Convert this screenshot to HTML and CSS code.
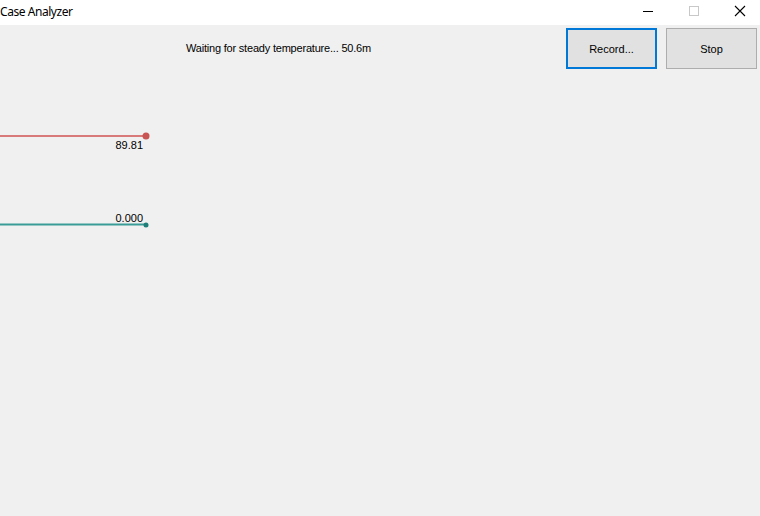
FILE: index.html
```html
<!DOCTYPE html>
<html lang="en">
<head>
    <meta charset="UTF-8">
    <meta name="viewport" content="width=device-width, initial-scale=1.0">
    <title>Case Analyzer</title>
    <link rel="stylesheet" href="styles.css">
</head>
<body>
    <div class="titlebar">
        <span class="title">Case Analyzer</span>
        <div class="controls">
            <span class="ctl">
                <svg width="12" height="12" viewBox="0 0 12 12"><line x1="1" y1="6.5" x2="11" y2="6.5" stroke="#000" stroke-width="1"/></svg>
            </span>
            <span class="ctl">
                <svg width="12" height="12" viewBox="0 0 12 12"><rect x="1.5" y="1.5" width="9" height="9" fill="none" stroke="#c8c8c8" stroke-width="1"/></svg>
            </span>
            <span class="ctl">
                <svg width="12" height="12" viewBox="0 0 12 12"><path d="M1 1 L11 11 M11 1 L1 11" stroke="#000" stroke-width="1.1"/></svg>
            </span>
        </div>
    </div>

    <div class="toolbar">
        <span class="status">Waiting for steady temperature... 50.6m</span>
        <button class="btn focused">Record...</button>
        <button class="btn">Stop</button>
    </div>

    <!-- live trace panel: temperature and flow traces -->
    <svg class="chart" width="760" height="448" viewBox="0 0 760 448">
        <line x1="0" y1="68" x2="146" y2="68" stroke="#d97a7a" stroke-width="2"/>
        <circle cx="146" cy="68" r="3.5" fill="#c85454"/>
        <text x="143" y="81" text-anchor="end" class="val">89.81</text>

        <line x1="0" y1="156.5" x2="146" y2="156.5" stroke="#3a9c96" stroke-width="2"/>
        <circle cx="146" cy="157" r="2.5" fill="#1f7f78"/>
        <text x="143" y="154" text-anchor="end" class="val">0.000</text>
    </svg>
</body>
</html>
```

FILE: styles.css
```css
body {
    margin: 0;
    width: 760px;
    height: 516px;
    overflow: hidden;
    background-color: #f0f0f0;
    font-family: "Liberation Sans", Arial, sans-serif;
}
.titlebar {
    height: 25px;
    background-color: #fff;
    display: flex;
    align-items: center;
    justify-content: space-between;
}
.title {
    font-family: "Noto Sans", "Open Sans", sans-serif;
    font-size: 12px;
    letter-spacing: -0.45px;
    color: #000;
    margin-top: -2px;
}
.controls {
    display: flex;
    margin-top: -3px;
    margin-right: -3px;
}
.ctl {
    width: 46px;
    display: flex;
    justify-content: center;
}
.toolbar {
    display: flex;
    align-items: flex-start;
    padding: 3px 3px 0 0;
    height: 40px;
}
.status {
    flex: 1;
    margin-left: 186px;
    margin-top: 14px;
    font-size: 11px;
    letter-spacing: -0.2px;
    color: #000;
}
.btn {
    width: 91px;
    height: 41px;
    margin-left: 9px;
    background-color: #e1e1e1;
    border: 1px solid #adadad;
    font-family: "Liberation Sans", Arial, sans-serif;
    font-size: 11px;
    color: #000;
    padding: 0;
}
.btn.focused {
    border: 2px solid #0078d7;
    margin-left: 0;
}
.chart {
    display: block;
}
.val {
    font-family: "Liberation Sans", Arial, sans-serif;
    font-size: 11px;
    fill: #000;
}
```
